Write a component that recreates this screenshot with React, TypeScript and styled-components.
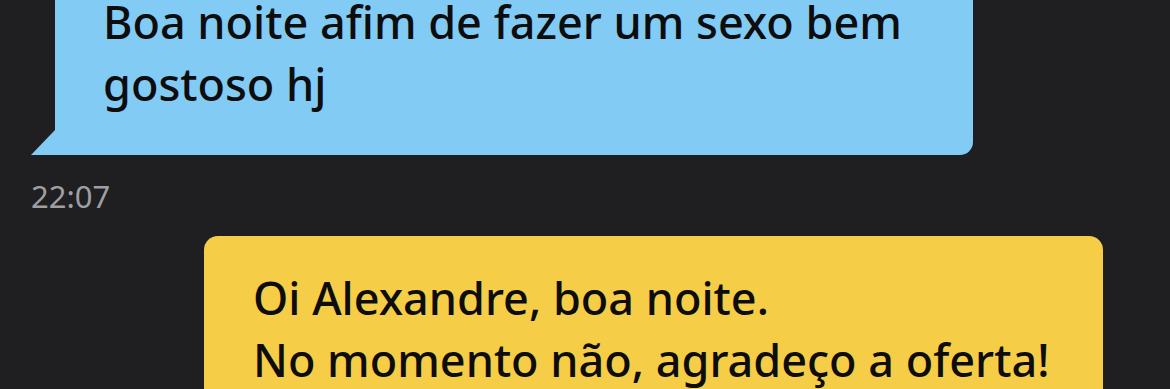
import React from "react";
import styled, { createGlobalStyle } from "styled-components";

const GlobalStyle = createGlobalStyle`
  html, body {
    margin: 0;
    padding: 0;
    background: #1f1f21;
    overflow: hidden;
  }
  body {
    font-family: "Noto Sans", "Open Sans", sans-serif;
  }
`;

const Thread = styled.div`
  width: 1170px;
  height: 389px;
  overflow: hidden;
  background: #1f1f21;
  display: flex;
  flex-direction: column;
  padding: 0 67px 0 31px;
  box-sizing: border-box;
`;

const Group = styled.div<{ $out?: boolean }>`
  display: flex;
  flex-direction: column;
  align-items: ${(p) => (p.$out ? "flex-end" : "flex-start")};
`;

const Bubble = styled.div<{ $out?: boolean }>`
  position: relative;
  box-sizing: border-box;
  width: ${(p) => (p.$out ? "899px" : "918px")};
  margin-left: ${(p) => (p.$out ? "0" : "24px")};
  margin-top: ${(p) => (p.$out ? "22px" : "-25px")};
  padding: ${(p) => (p.$out ? "31px 16px 40px 49px" : "16px 40px 40px 48px")};
  background: ${(p) => (p.$out ? "#f6cd46" : "#81cbf5")};
  color: #0d0d0d;
  border-radius: ${(p) => (p.$out ? "14px" : "13px 13px 13px 0")};
  font-size: 45px;
  line-height: 62px;
  font-weight: 500;
  letter-spacing: 0;
  white-space: pre-line;

  ${(p) =>
    !p.$out &&
    `
    &::before {
      content: "";
      position: absolute;
      left: -24px;
      bottom: 0;
      width: 0;
      height: 0;
      border-bottom: 25px solid #81cbf5;
      border-left: 24px solid transparent;
    }
  `}
`;

const Time = styled.div`
  margin-top: 23px;
  font-size: 31px;
  line-height: 36px;
  color: #9e9ea3;
`;

export default function App() {
  return (
    <>
      <GlobalStyle />
      <Thread>
        <Group>
          <Bubble>Boa noite afim de fazer um sexo bem gostoso hj</Bubble>
          <Time>22:07</Time>
        </Group>
        <Group $out>
          <Bubble $out>{"Oi Alexandre, boa noite.\nNo momento não, agradeço a oferta!"}</Bubble>
        </Group>
      </Thread>
    </>
  );
}
